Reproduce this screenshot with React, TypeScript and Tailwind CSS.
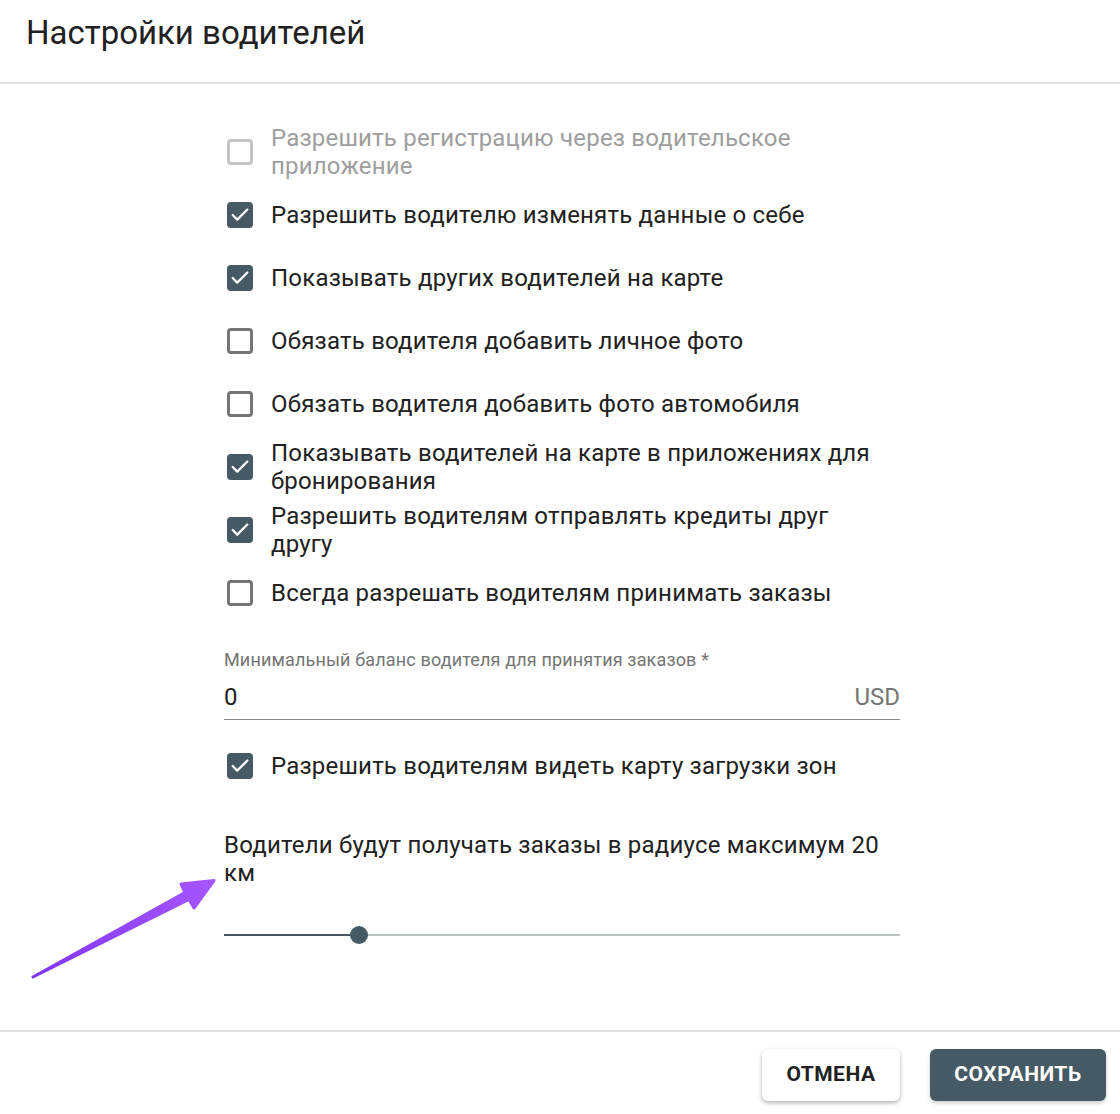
import { Check } from 'lucide-react';

const options = [
  { label: 'Разрешить регистрацию через водительское приложение', checked: false, disabled: true },
  { label: 'Разрешить водителю изменять данные о себе', checked: true },
  { label: 'Показывать других водителей на карте', checked: true },
  { label: 'Обязать водителя добавить личное фото', checked: false },
  { label: 'Обязать водителя добавить фото автомобиля', checked: false },
  { label: 'Показывать водителей на карте в приложениях для бронирования', checked: true },
  { label: 'Разрешить водителям отправлять кредиты друг другу', checked: true },
  { label: 'Всегда разрешать водителям принимать заказы', checked: false },
];

const CheckRow = ({ label, checked, disabled }: { label: string; checked: boolean; disabled?: boolean }) => (
  <label className="flex items-center h-[63px] gap-[18px]">
    <span
      className={`shrink-0 w-[26px] h-[26px] rounded-[4px] flex items-center justify-center ${
        checked
          ? 'bg-[#455a64]'
          : disabled
          ? 'border-[3px] border-[#c4c4c4]'
          : 'border-[3px] border-[#757575]'
      } ml-[3px]`}
    >
      {checked && <Check className="w-[22px] h-[22px] text-white" strokeWidth={2.5} />}
    </span>
    <span
      className={`text-[24px] leading-[28px] tracking-[0.2px] pr-[26px] ${
        disabled ? 'text-[#9e9e9e]' : 'text-[#212121]'
      }`}
    >
      {label}
    </span>
  </label>
);

export default function App() {
  return (
    <div className="relative w-[1120px] h-[1114px] bg-white flex flex-col font-['Roboto',sans-serif] text-[#212121]">
      {/* Header */}
      <div className="h-[84px] border-b-2 border-[#e0e0e0] pl-[26px] pt-[13px]">
        <h1 className="text-[33px] leading-[40px] text-[#212121]">Настройки водителей</h1>
      </div>

      {/* Body */}
      <div className="flex-1 pt-[36px]">
        <div className="ml-[224px] w-[676px] flex flex-col">
          {options.map((o) => (
            <CheckRow key={o.label} {...o} />
          ))}

          <div className="mt-[26px]">
            <div className="text-[18px] leading-[20px] tracking-[0.15px] text-[#757575]">
              Минимальный баланс водителя для принятия заказов *
            </div>
            <div className="flex items-center justify-between h-[46px] mt-[4px] border-b border-[#8a8a8a]">
              <span className="text-[24px]">0</span>
              <span className="text-[24px] text-[#757575]">USD</span>
            </div>
          </div>

          <div className="mt-[14px]">
            <CheckRow label="Разрешить водителям видеть карту загрузки зон" checked />
          </div>

          <div className="mt-[34px] text-[24px] leading-[28px] tracking-[0.2px]">
            Водители будут получать заказы в радиусе максимум 20 км
          </div>

          <div className="relative mt-[38px] h-[20px] flex items-center">
            <div className="h-[2px] w-full bg-[#bcc1c4]" />
            <div className="absolute left-0 top-[9px] h-[2px] w-[135px] bg-[#455a64]" />
            <div className="absolute left-[126px] top-[1px] w-[18px] h-[18px] rounded-full bg-[#455a64]" />
          </div>
        </div>
      </div>

      {/* Footer */}
      <div className="h-[84px] border-t-2 border-[#e0e0e0] flex justify-end items-start pt-[17px] pr-[14px] gap-[30px]">
        <button className="w-[138px] h-[52px] rounded-[6px] bg-white shadow-[0_2px_4px_rgba(0,0,0,0.3)] text-[21px] font-bold tracking-[0.5px] text-[#212121]">
          ОТМЕНА
        </button>
        <button className="w-[176px] h-[52px] rounded-[6px] bg-[#455a64] shadow-[0_2px_4px_rgba(0,0,0,0.2)] text-[21px] font-bold tracking-[0.5px] text-white">
          СОХРАНИТЬ
        </button>
      </div>

      {/* Annotation arrow */}
      <svg className="absolute left-0 top-0 pointer-events-none" width="1120" height="1114" viewBox="0 0 1120 1114">
        <defs>
          <linearGradient id="arrowGrad" x1="33" y1="977" x2="215" y2="880" gradientUnits="userSpaceOnUse">
            <stop offset="0" stopColor="#8236f0" />
            <stop offset="1" stopColor="#a656ff" />
          </linearGradient>
        </defs>
        <path
          d="M33 977 L185 892.5 L181 884 L214 880.5 L194 908 L189 899.5 Z"
          fill="url(#arrowGrad)"
          stroke="url(#arrowGrad)"
          strokeWidth="3"
          strokeLinejoin="round"
        />
      </svg>
    </div>
  );
}
